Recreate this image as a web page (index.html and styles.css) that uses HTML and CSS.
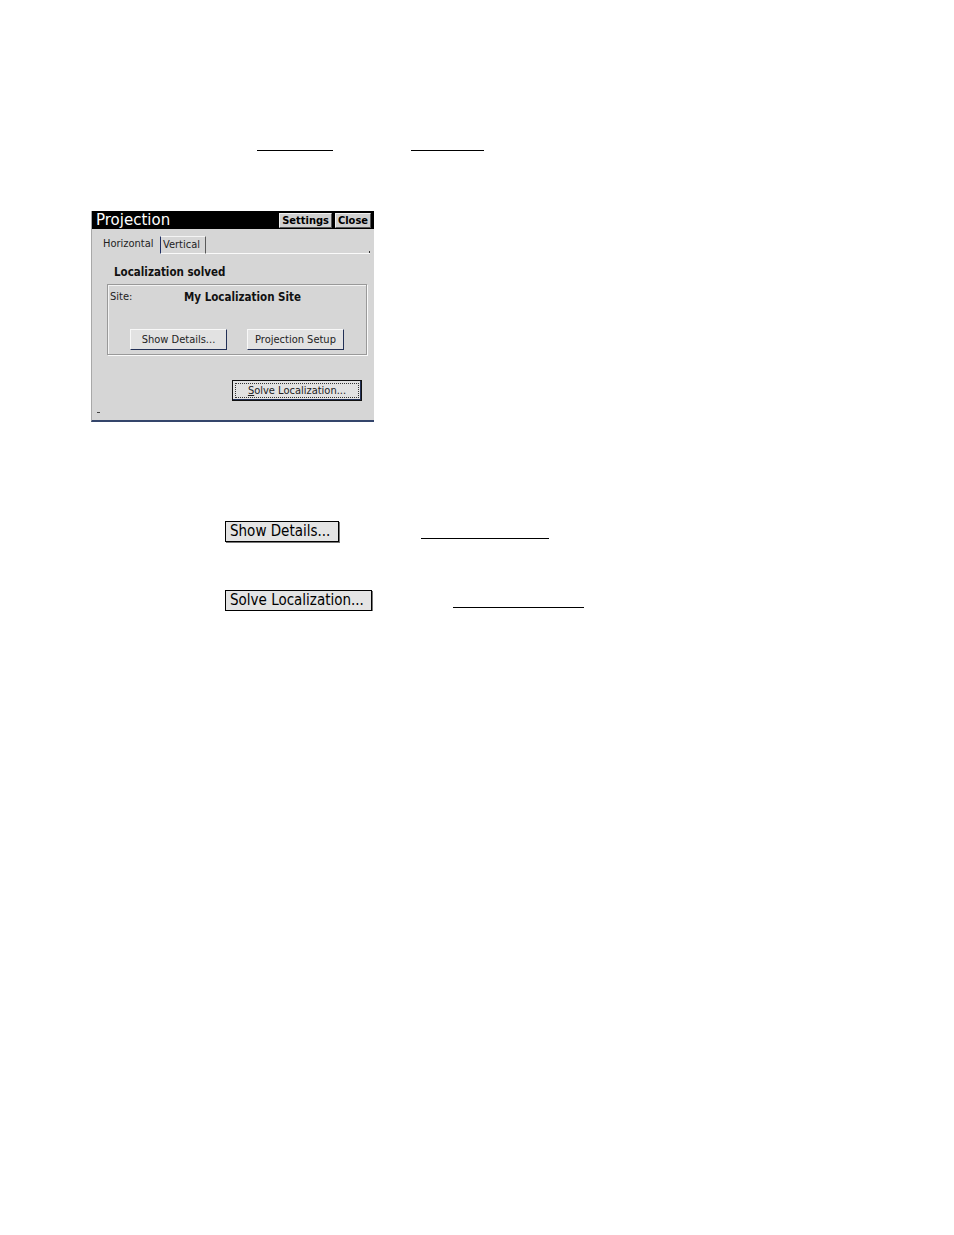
FILE: index.html
```html
<!DOCTYPE html>
<html lang="en">

<head>
    <meta charset="UTF-8">
    <meta name="viewport" content="width=device-width, initial-scale=1.0">
    <title>Projection</title>
    <link rel="stylesheet" href="styles.css">
</head>

<body>

    <div class="blanks">
        <span class="blank blank-a"></span>
        <span class="blank blank-b"></span>
    </div>

    <div class="dialog">
        <div class="titlebar">
            <span class="title">Projection</span>
            <span class="tb-btn">Settings</span>
            <span class="tb-btn">Close</span>
        </div>
        <div class="dlg-body">
            <div class="tabs">
                <div class="tab tab-on">Horizontal</div>
                <div class="tab tab-off">Vertical</div>
                <div class="tab-rest"></div>
            </div>
            <div class="status">Localization solved</div>
            <div class="group">
                <div class="site-row">
                    <span class="site-label">Site:</span>
                    <span class="site-name">My Localization Site</span>
                </div>
                <div class="group-btns">
                    <div class="btn">Show Details...</div>
                    <div class="btn">Projection Setup</div>
                </div>
            </div>
            <div class="btn btn-default"><span class="focus"><u>S</u>olve Localization...</span></div>
            <div class="mark"></div>
        </div>
    </div>

    <div class="row row-1">
        <div class="key-btn key-show">Show Details...</div>
        <span class="blank blank-c"></span>
    </div>

    <div class="row row-2">
        <div class="key-btn key-solve">Solve Localization...</div>
        <span class="blank blank-d"></span>
    </div>

</body>

</html>
```

FILE: styles.css
```css
* {
    margin: 0;
    padding: 0;
    box-sizing: border-box;
}

html,
body {
    background-color: white;
    color: black;
    font-family: "DejaVu Sans", sans-serif;
}

/* blank lines in the text */
.blanks {
    display: flex;
    margin-top: 130px;
    height: 21px;
}

.blank {
    display: block;
    height: 21px;
    border-bottom: 1px solid black;
}

.blank-a {
    margin-left: 257px;
    width: 76px;
}

.blank-b {
    margin-left: 78px;
    width: 73px;
}

/* dialog screenshot */
.dialog {
    margin-top: 60px;
    margin-left: 91px;
    width: 283px;
    height: 211px;
    border-left: 1px solid #a8a8a8;
    border-bottom: 2px solid #34456b;
    background-color: #d6d6d6;
    display: flex;
    flex-direction: column;
}

.titlebar {
    height: 18px;
    background-color: black;
    display: flex;
    align-items: center;
    padding-right: 3px;
}

.title {
    color: white;
    font-size: 15px;
    margin-left: 4px;
    flex: 1;
    line-height: 18px;
}

.tb-btn {
    background-color: #d0d0d0;
    color: black;
    font-family: "DejaVu Sans Condensed", "DejaVu Sans", sans-serif;
    font-weight: bold;
    font-size: 11px;
    height: 15px;
    line-height: 14px;
    padding: 0 2px;
    margin-left: 3px;
    border: 1px solid #f0f0f0;
    border-right-color: #555;
    border-bottom-color: #555;
}

.dlg-body {
    flex: 1;
    display: flex;
    flex-direction: column;
    align-items: flex-start;
    font-family: "DejaVu Sans Condensed", "DejaVu Sans", sans-serif;
    font-size: 11px;
    color: #222;
}

.tabs {
    display: flex;
    align-self: stretch;
    margin: 6px 4px 0 7px;
    height: 19px;
}

.tab {
    line-height: 17px;
    padding: 0 3px;
}

.tab-on {
    padding-left: 4px;
    width: 61px;
}

.tab-off {
    margin-top: 1px;
    width: 46px;
    border-left: 1px solid #1d2d62;
    border-right: 1px solid #5a5a5a;
    border-top: 1px solid #f4f4f4;
    border-bottom: 1px solid #fafafa;
    line-height: 15px;
    padding-left: 2px;
}

.tab-rest {
    flex: 1;
    border-bottom: 1px solid #fafafa;
    position: relative;
}

.tab-rest::after {
    content: "";
    position: absolute;
    right: 0;
    bottom: 0;
    width: 1px;
    height: 2px;
    background-color: #333;
}

.status {
    margin-top: 11px;
    margin-left: 22px;
    font-weight: bold;
    font-size: 11.5px;
    line-height: 14px;
    color: #111;
}

.group {
    margin-top: 5px;
    margin-left: 15px;
    width: 260px;
    height: 71px;
    border: 1px solid #999;
    box-shadow: 1px 1px 0 #fafafa, inset 1px 1px 0 #f4f4f4;
    display: flex;
    flex-direction: column;
}

.site-row {
    display: flex;
    margin-top: 5px;
    padding-left: 2px;
    line-height: 14px;
}

.site-label {
    width: 74px;
}

.site-name {
    font-weight: bold;
    font-size: 11.5px;
    color: #111;
}

.group-btns {
    display: flex;
    gap: 20px;
    margin-top: 25px;
    margin-left: 22px;
}

.btn {
    width: 97px;
    height: 21px;
    line-height: 19px;
    text-align: center;
    white-space: nowrap;
    background-color: #e2e2e2;
    border: 1px solid #f8f8f8;
    border-right-color: #223056;
    border-bottom-color: #223056;
}

.btn-default {
    margin-top: 25px;
    margin-left: 140px;
    width: 130px;
    border: 1px solid #111;
    box-shadow: inset -1px -1px 0 #223056;
    padding: 2px;
    line-height: 13px;
}

.focus {
    display: block;
    border: 1px dotted #333;
    height: 15px;
}

.mark {
    margin-top: 11px;
    margin-left: 5px;
    width: 3px;
    height: 1px;
    background-color: #444;
}

/* buttons as they appear in the text */
.row {
    display: flex;
    align-items: flex-start;
}

.row-1 {
    margin-top: 99px;
}

.row-2 {
    margin-top: 48px;
}

.key-btn {
    margin-left: 225px;
    height: 21px;
    line-height: 19px;
    font-family: "DejaVu Sans Condensed", "DejaVu Sans", sans-serif;
    font-size: 15px;
    white-space: nowrap;
    padding-left: 4px;
    background-color: #e4e4e4;
    border: 1px solid black;
    box-shadow: 1px 1px 0 #777;
}

.key-show {
    width: 114px;
}

.key-solve {
    width: 147px;
}

.blank-c {
    margin-left: 82px;
    width: 128px;
    height: 18px;
}

.blank-d {
    margin-left: 81px;
    width: 131px;
    height: 18px;
}
```
